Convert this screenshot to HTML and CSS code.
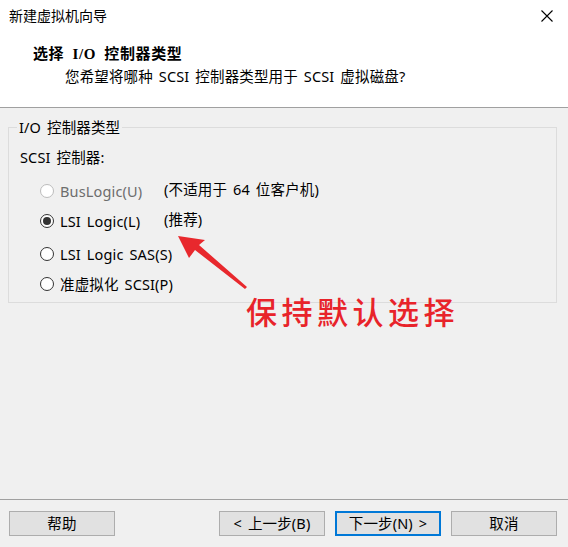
FILE: index.html
```html
<!DOCTYPE html>
<html lang="zh-CN">
<head>
<meta charset="utf-8">
<title>新建虚拟机向导</title>
<link rel="stylesheet" href="styles.css">
</head>
<body>
<div class="window">
  <header class="header">
    <div class="titlebar">
      <span class="title">新建虚拟机向导</span>
      <svg class="close" width="12" height="12" viewBox="0 0 12 12"><path d="M0.5 0.5L11.5 11.5M11.5 0.5L0.5 11.5" stroke="#000" stroke-width="1.1" fill="none"/></svg>
    </div>
    <div class="heading">选择 I/O 控制器类型</div>
    <div class="subheading">您希望将哪种 SCSI 控制器类型用于 SCSI 虚拟磁盘?</div>
  </header>
  <main class="main">
    <fieldset class="group">
      <legend class="legend">I/O 控制器类型</legend>
      <div class="caption">SCSI 控制器:</div>
      <div class="options">
        <div class="opt row1 disabled"><span class="radio"></span>BusLogic(U)</div>
        <div class="note row1">(不适用于 64 位客户机)</div>
        <div class="opt row2"><span class="radio checked"></span>LSI Logic(L)</div>
        <div class="note row2">(推荐)</div>
        <div class="opt row3"><span class="radio"></span>LSI Logic SAS(S)</div>
        <div class="opt row4"><span class="radio"></span>准虚拟化 SCSI(P)</div>
      </div>
    </fieldset>
    <svg class="arrow" width="568" height="547" viewBox="0 0 568 547">
      <polygon points="178,236 205,240 199,245 247,287 245,289 195,250 189,258" fill="#e8282d"/>
    </svg>
    <div class="annot">保持默认选择</div>
  </main>
  <footer class="footer">
    <button class="btn">帮助</button>
    <div class="btn-group">
      <button class="btn">&lt; 上一步(B)</button>
      <button class="btn primary">下一步(N) &gt;</button>
      <button class="btn">取消</button>
    </div>
  </footer>
</div>
</body>
</html>
```

FILE: styles.css
```css
* { box-sizing: border-box; }
html, body { margin: 0; padding: 0; }
body {
  width: 568px;
  height: 547px;
  background: #f0f0f0;
  font-family: "Noto Sans", "Noto Sans CJK SC", sans-serif;
  font-size: 14.5px;
  letter-spacing: 0.15px;
  word-spacing: 2px;
  color: #000;
  overflow: hidden;
}
.window {
  position: relative;
  display: flex;
  flex-direction: column;
  height: 547px;
}
.header {
  background: #fff;
  height: 108px;
  border-bottom: 1px solid #a0a0a0;
}
.titlebar {
  display: flex;
  justify-content: space-between;
  align-items: center;
  height: 32px;
  padding: 0 15px 0 9px;
}
.title { line-height: 20px; letter-spacing: 0; font-size: 14px; }
.close { display: block; }
.heading {
  margin-top: 12px;
  padding-left: 33px;
  line-height: 20px;
  font-weight: bold;
  font-family: "Liberation Serif", "Noto Sans CJK SC", serif;
  font-size: 15px;
  letter-spacing: 0.6px;
  word-spacing: 4px;
}
.subheading {
  margin-top: 2px;
  padding-left: 65px;
  line-height: 20px;
}
.main {
  flex: 1;
  padding: 9px 11px 0 8px;
}
.group {
  margin: 0;
  padding: 0 0 11px 11px;
  border: 1px solid #dcdcdc;
  min-width: 0;
}
.legend {
  margin-left: -3px;
  padding: 0 2px;
  line-height: 20px;
}
.caption {
  margin-top: 10px;
  line-height: 20px;
}
.options {
  display: grid;
  grid-template-columns: 124px auto;
  grid-template-rows: 20px 20px 20px 20px;
  row-gap: 10px;
  margin-top: 14px;
  padding-left: 20px;
}
.row1 { grid-row: 1; }
.row2 { grid-row: 2; }
.row3 { grid-row: 3; margin-top: 5px; }
.row4 { grid-row: 4; margin-top: 5px; }
.opt {
  grid-column: 1 / span 2;
  display: flex;
  align-items: center;
  line-height: 20px;
  white-space: nowrap;
}
.note {
  grid-column: 2;
  line-height: 20px;
  margin-top: -2px;
}
.opt.row1, .opt.row2 { grid-column: 1; }
.radio {
  width: 14px;
  height: 14px;
  border: 1px solid #333;
  border-radius: 50%;
  background: #fff;
  margin-right: 6px;
  position: relative;
  flex: none;
}
.radio.checked::after {
  content: "";
  position: absolute;
  left: 2px;
  top: 2px;
  width: 8px;
  height: 8px;
  border-radius: 50%;
  background: #333;
}
.disabled { color: #6d6d6d; }
.disabled .radio { border-color: #bcbcbc; }
.arrow {
  position: absolute;
  left: 0;
  top: 0;
  pointer-events: none;
}
.annot {
  position: absolute;
  left: 246px;
  top: 293px;
  color: #e8232a;
  font-size: 31px;
  line-height: 36px;
  letter-spacing: 4.5px;
  word-spacing: 0;
  font-weight: 500;
  font-family: "Noto Sans CJK SC", sans-serif;
}
.footer {
  height: 48px;
  border-top: 1px solid #a0a0a0;
  display: flex;
  justify-content: space-between;
  align-items: flex-start;
  padding: 11px 11px 0 9px;
}
.btn-group {
  display: flex;
  gap: 10px;
}
.btn {
  width: 106px;
  height: 25px;
  background: #e1e1e1;
  border: 1px solid #adadad;
  font-family: "Noto Sans", "Noto Sans CJK SC", sans-serif;
  font-size: 14.5px;
  letter-spacing: 0.15px;
  word-spacing: 2px;
  line-height: 21px;
  padding: 0;
  color: #000;
}
.btn.primary {
  border: 2px solid #0078d7;
  line-height: 19px;
}
```
